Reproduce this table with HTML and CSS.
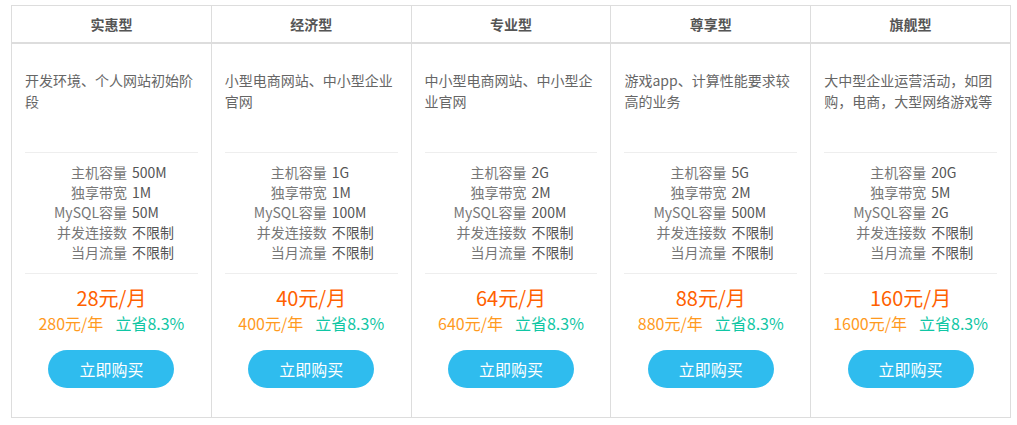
FILE: index.html
```html
<!DOCTYPE html>
<html lang="zh-CN">
<head>
    <meta charset="UTF-8">
    <title>虚拟主机价格</title>
    <link rel="stylesheet" href="styles.css">
</head>
<body>
<div class="plans">
    <div class="plan">
        <div class="plan-name">实惠型</div>
        <div class="plan-body">
            <div class="plan-desc">开发环境、个人网站初始阶段</div>
            <div class="plan-specs">
                <div class="spec"><span class="spec-label">主机容量</span><span class="spec-value">500M</span></div>
                <div class="spec"><span class="spec-label">独享带宽</span><span class="spec-value">1M</span></div>
                <div class="spec"><span class="spec-label">MySQL容量</span><span class="spec-value">50M</span></div>
                <div class="spec"><span class="spec-label">并发连接数</span><span class="spec-value">不限制</span></div>
                <div class="spec"><span class="spec-label">当月流量</span><span class="spec-value">不限制</span></div>
            </div>
            <div class="price-month">28元/月</div>
            <div class="price-year"><span class="year">280元/年</span><span class="save">立省8.3%</span></div>
            <button class="buy">立即购买</button>
        </div>
    </div>
    <div class="plan">
        <div class="plan-name">经济型</div>
        <div class="plan-body">
            <div class="plan-desc">小型电商网站、中小型企业官网</div>
            <div class="plan-specs">
                <div class="spec"><span class="spec-label">主机容量</span><span class="spec-value">1G</span></div>
                <div class="spec"><span class="spec-label">独享带宽</span><span class="spec-value">1M</span></div>
                <div class="spec"><span class="spec-label">MySQL容量</span><span class="spec-value">100M</span></div>
                <div class="spec"><span class="spec-label">并发连接数</span><span class="spec-value">不限制</span></div>
                <div class="spec"><span class="spec-label">当月流量</span><span class="spec-value">不限制</span></div>
            </div>
            <div class="price-month">40元/月</div>
            <div class="price-year"><span class="year">400元/年</span><span class="save">立省8.3%</span></div>
            <button class="buy">立即购买</button>
        </div>
    </div>
    <div class="plan">
        <div class="plan-name">专业型</div>
        <div class="plan-body">
            <div class="plan-desc">中小型电商网站、中小型企业官网</div>
            <div class="plan-specs">
                <div class="spec"><span class="spec-label">主机容量</span><span class="spec-value">2G</span></div>
                <div class="spec"><span class="spec-label">独享带宽</span><span class="spec-value">2M</span></div>
                <div class="spec"><span class="spec-label">MySQL容量</span><span class="spec-value">200M</span></div>
                <div class="spec"><span class="spec-label">并发连接数</span><span class="spec-value">不限制</span></div>
                <div class="spec"><span class="spec-label">当月流量</span><span class="spec-value">不限制</span></div>
            </div>
            <div class="price-month">64元/月</div>
            <div class="price-year"><span class="year">640元/年</span><span class="save">立省8.3%</span></div>
            <button class="buy">立即购买</button>
        </div>
    </div>
    <div class="plan">
        <div class="plan-name">尊享型</div>
        <div class="plan-body">
            <div class="plan-desc">游戏app、计算性能要求较高的业务</div>
            <div class="plan-specs">
                <div class="spec"><span class="spec-label">主机容量</span><span class="spec-value">5G</span></div>
                <div class="spec"><span class="spec-label">独享带宽</span><span class="spec-value">2M</span></div>
                <div class="spec"><span class="spec-label">MySQL容量</span><span class="spec-value">500M</span></div>
                <div class="spec"><span class="spec-label">并发连接数</span><span class="spec-value">不限制</span></div>
                <div class="spec"><span class="spec-label">当月流量</span><span class="spec-value">不限制</span></div>
            </div>
            <div class="price-month">88元/月</div>
            <div class="price-year"><span class="year">880元/年</span><span class="save">立省8.3%</span></div>
            <button class="buy">立即购买</button>
        </div>
    </div>
    <div class="plan">
        <div class="plan-name">旗舰型</div>
        <div class="plan-body">
            <div class="plan-desc">大中型企业运营活动，如团购，电商，大型网络游戏等</div>
            <div class="plan-specs">
                <div class="spec"><span class="spec-label">主机容量</span><span class="spec-value">20G</span></div>
                <div class="spec"><span class="spec-label">独享带宽</span><span class="spec-value">5M</span></div>
                <div class="spec"><span class="spec-label">MySQL容量</span><span class="spec-value">2G</span></div>
                <div class="spec"><span class="spec-label">并发连接数</span><span class="spec-value">不限制</span></div>
                <div class="spec"><span class="spec-label">当月流量</span><span class="spec-value">不限制</span></div>
            </div>
            <div class="price-month">160元/月</div>
            <div class="price-year"><span class="year">1600元/年</span><span class="save">立省8.3%</span></div>
            <button class="buy">立即购买</button>
        </div>
    </div>
</div>
</body>
</html>
```

FILE: styles.css
```css
body, html {
    margin: 0;
    padding: 0;
    background: #fff;
    font-family: "Noto Sans CJK SC", "Noto Sans", sans-serif;
}

body {
    padding: 5px 0 0 11px;
}

.plans {
    display: flex;
    width: 1000px;
    box-sizing: border-box;
    border: 1px solid #ddd;
}

.plan {
    flex: 1;
    min-width: 0;
}

.plan + .plan {
    border-left: 1px solid #ddd;
}

.plan-name {
    height: 36px;
    line-height: 36px;
    border-bottom: 2px solid #ddd;
    text-align: center;
    font-size: 14px;
    font-weight: bold;
    color: #555;
}

.plan-body {
    padding: 0 13px 29px 13px;
    text-align: center;
}

.plan-desc {
    height: 109px;
    box-sizing: border-box;
    padding-top: 26px;
    border-bottom: 1px solid #eee;
    text-align: left;
    font-size: 14px;
    line-height: 21px;
    color: #666;
}

.plan-specs {
    padding: 9px 0 11px;
    border-bottom: 1px solid #eee;
}

.spec {
    display: flex;
    gap: 5px;
    font-size: 14px;
    line-height: 20px;
    color: #666;
}

.spec-label {
    width: 102px;
    flex-shrink: 0;
    text-align: right;
    color: #777;
}

.spec-value {
    color: #555;
}

.price-month {
    margin-top: 11px;
    font-size: 20px;
    line-height: 26px;
    color: #ff6100;
}

.price-year {
    font-size: 16px;
    line-height: 24px;
}

.year {
    color: #ff9a1e;
    margin-right: 12px;
}

.save {
    color: #10c6a4;
}

.buy {
    display: block;
    margin: 15px auto 0;
    width: 126px;
    height: 38px;
    border: none;
    border-radius: 19px;
    background: #2fbcee;
    color: #fff;
    font-family: inherit;
    font-size: 16px;
    cursor: pointer;
}

.buy:hover {
    background: #24aadb;
}
```
